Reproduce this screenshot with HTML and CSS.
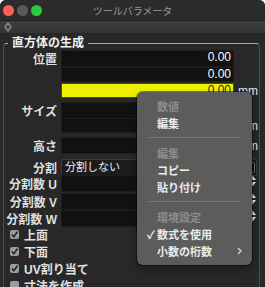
FILE: index.html
```html
<!DOCTYPE html>
<html lang="ja">
<head>
    <meta charset="UTF-8">
    <meta name="viewport" content="width=device-width, initial-scale=1.0">
    <title>ツールパラメータ</title>
    <link rel="stylesheet" href="styles.css">
</head>
<body>
    <div class="window">
        <!-- タイトルバー -->
        <div class="titlebar">
            <div class="lights">
                <span class="light red"></span>
                <span class="light idle"></span>
                <span class="light green"></span>
            </div>
            <div class="title">ツールパラメータ</div>
        </div>

        <div class="toolbar">
            <svg class="grip" width="8" height="10" viewBox="0 0 8 10">
                <path d="M4 1 L7 5 L4 9 L1 5 Z" fill="none" stroke="#8a8a8a" stroke-width="1.4" stroke-linejoin="round"/>
            </svg>
        </div>

        <div class="content">
            <fieldset class="group">
                <legend>直方体の生成</legend>

                <div class="row">
                    <span class="label">位置</span>
                    <span class="field">0.00</span>
                </div>
                <div class="row next">
                    <span class="label"></span>
                    <span class="field">0.00</span>
                </div>
                <div class="row tight">
                    <span class="label"></span>
                    <span class="field active">0.00</span>
                    <span class="unit">mm</span>
                </div>

                <div class="row spaced">
                    <span class="label">サイズ</span>
                    <span class="field"></span>
                </div>
                <div class="row tight">
                    <span class="label"></span>
                    <span class="field"></span>
                    <span class="unit">mm</span>
                </div>
                <div class="row spaced tall">
                    <span class="label">高さ</span>
                    <span class="field"></span>
                    <span class="unit">mm</span>
                </div>

                <div class="row select-row">
                    <span class="label">分割</span>
                    <span class="select">
                        <span class="select-text">分割しない</span>
                        <span class="select-arrow"></span>
                    </span>
                </div>

                <div class="row count first-count">
                    <span class="label">分割数 U</span>
                    <span class="field"></span>
                    <svg class="stepper" width="10" height="13" viewBox="0 0 10 13">
                        <path d="M1 5 L5 0 L9 5 Z M1 7 L9 7 L5 12 Z" fill="#f2f2f2"/>
                    </svg>
                </div>
                <div class="row count">
                    <span class="label">分割数 V</span>
                    <span class="field"></span>
                    <svg class="stepper" width="10" height="13" viewBox="0 0 10 13">
                        <path d="M1 5 L5 0 L9 5 Z M1 7 L9 7 L5 12 Z" fill="#f2f2f2"/>
                    </svg>
                </div>
                <div class="row count">
                    <span class="label">分割数 W</span>
                    <span class="field"></span>
                    <svg class="stepper" width="10" height="13" viewBox="0 0 10 13">
                        <path d="M1 5 L5 0 L9 5 Z M1 7 L9 7 L5 12 Z" fill="#f2f2f2"/>
                    </svg>
                </div>

                <div class="checks">
                    <label class="check-row"><span class="box on"></span>上面</label>
                    <label class="check-row"><span class="box on"></span>下面</label>
                    <label class="check-row"><span class="box on"></span>UV割り当て</label>
                    <label class="check-row"><span class="box"></span>寸法を作成</label>
                </div>
            </fieldset>
        </div>

        <!-- コンテキストメニュー -->
        <div class="menu">
            <div class="menu-item disabled"><span class="mark"></span>数値</div>
            <div class="menu-item"><span class="mark"></span>編集</div>
            <div class="menu-sep"></div>
            <div class="menu-item disabled"><span class="mark"></span>編集</div>
            <div class="menu-item"><span class="mark"></span>コピー</div>
            <div class="menu-item"><span class="mark"></span>貼り付け</div>
            <div class="menu-sep"></div>
            <div class="menu-item disabled"><span class="mark"></span>環境設定</div>
            <div class="menu-item"><span class="mark">✓</span>数式を使用</div>
            <div class="menu-item">
                <span class="mark"></span>小数の桁数
                <svg class="submenu" width="5" height="8" viewBox="0 0 5 8">
                    <path d="M1 1 L4 4 L1 7" fill="none" stroke="#d8d8d8" stroke-width="1.3"/>
                </svg>
            </div>
        </div>
    </div>
</body>
</html>
```
FILE: styles.css
```css
html, body {
    margin: 0;
    padding: 0;
    background-color: #ffffff;
}

body {
    font-family: "Liberation Sans", "Noto Sans CJK JP", sans-serif;
    color: #e2e2e2;
}

.window {
    position: relative;
    width: 265px;
    height: 287px;
    background-color: #282828;
    border-radius: 6px 6px 0 0;
    overflow: hidden;
}

/* タイトルバー */
.titlebar {
    display: grid;
    height: 20px;
    background-color: #2c2c2c;
}

.lights,
.title {
    grid-area: 1 / 1;
}

.lights {
    display: flex;
    align-items: center;
    gap: 3px;
    padding-left: 3px;
}

.light {
    width: 11px;
    height: 11px;
    border-radius: 50%;
}

.light.red { background-color: #fe5f57; }
.light.idle { background-color: #5a5a5a; }
.light.green { background-color: #2ac940; }

.title {
    justify-self: center;
    align-self: center;
    font-size: 10px;
    color: #9a9a9a;
}

.toolbar {
    display: flex;
    align-items: center;
    height: 13px;
    padding-left: 4px;
    background: linear-gradient(#3f3f3f, #333333);
    border-top: 1px solid #1f1f1f;
    box-sizing: border-box;
}

.content {
    padding: 3px 0 0 3px;
}

/* グループ枠 */
.group {
    box-sizing: border-box;
    width: 257px;
    min-width: 0;
    margin: 0;
    padding: 0;
    border: 1px solid #4c4c4c;
    border-top-color: #a8a8a8;
    border-bottom: none;
    border-radius: 4px 4px 0 0;
}

.group legend {
    margin-left: 4px;
    padding: 0 4px;
    font-size: 12px;
    line-height: 14px;
    font-weight: bold;
    color: #f0f0f0;
}

.row {
    display: grid;
    grid-template-columns: 53px 173px 21px;
    column-gap: 4px;
    align-items: center;
    height: 15px;
}

.row.next { margin-top: 2px; }
.row.tight { margin-top: 1px; }
.row.spaced { margin-top: 4px; }
.row.tall { height: 17px; }

.label {
    text-align: right;
    white-space: nowrap;
    font-size: 12px;
    font-weight: bold;
    color: #dedede;
}

.field {
    box-sizing: border-box;
    height: 100%;
    padding-right: 2px;
    background-color: #111111;
    border: 1px solid #1d1d1d;
    text-align: right;
    font-size: 12px;
    line-height: 13px;
    color: #ffffff;
}

.field.active {
    background-color: #eef200;
    border-color: #505000;
    color: #333300;
}

.unit {
    font-size: 12px;
    color: #e6e6e6;
}

.select-row {
    margin-top: 5px;
    height: 13px;
}

.select {
    grid-column: 2 / 4;
    display: flex;
    align-items: center;
    height: 100%;
    margin-right: 2px;
    background-color: #1b1b1b;
    border: 1px solid #3a3a3a;
    border-radius: 2px;
    box-sizing: border-box;
}

.select-text {
    flex: 1;
    padding-left: 3px;
    font-size: 11px;
    line-height: 11px;
    color: #ececec;
}

.select-arrow {
    width: 5px;
    height: 9px;
    margin-right: 1px;
    background-color: #101010;
    border: 1px solid #6a6a6a;
    border-radius: 2px;
}

.count {
    margin-top: 2px;
}

.count.first-count {
    margin-top: 3px;
    height: 16px;
}

.stepper {
    margin-left: 9px;
    align-self: start;
}

/* チェックボックス */
.checks {
    display: flex;
    flex-direction: column;
    margin-top: 1px;
    padding-left: 6px;
}

.check-row {
    display: flex;
    align-items: center;
    gap: 5px;
    height: 17px;
    font-size: 12px;
    font-weight: bold;
    color: #e0e0e0;
}

.box {
    width: 9px;
    height: 9px;
    border-radius: 2px;
    background-color: #9c9c9c;
    box-sizing: border-box;
}

.box.on {
    background: #9c9c9c url("data:image/svg+xml,%3Csvg xmlns='http://www.w3.org/2000/svg' width='9' height='9'%3E%3Cpath d='M1.8 4.6 L3.8 6.8 L7.4 1.8' fill='none' stroke='%23222' stroke-width='1.5'/%3E%3C/svg%3E") no-repeat center;
}

/* メニュー */
.menu {
    position: absolute;
    left: 137px;
    top: 92px;
    width: 115px;
    padding: 5px 0 6px;
    box-sizing: border-box;
    background-color: #5c5c5c;
    border-radius: 6px;
    box-shadow: 0 0 0 1px rgba(0, 0, 0, 0.45), 0 4px 10px rgba(0, 0, 0, 0.35);
}

.menu-item {
    display: flex;
    align-items: center;
    height: 17px;
    padding-right: 10px;
    font-size: 11px;
    font-weight: bold;
    color: #ececec;
}

.menu-item.disabled {
    color: #8d8d8d;
}

.mark {
    width: 10px;
    padding-left: 10px;
    font-size: 11px;
}

.submenu {
    margin-left: auto;
}

.menu-sep {
    height: 1px;
    margin: 6px 11px 6px 10px;
    background-color: #747474;
}
```
